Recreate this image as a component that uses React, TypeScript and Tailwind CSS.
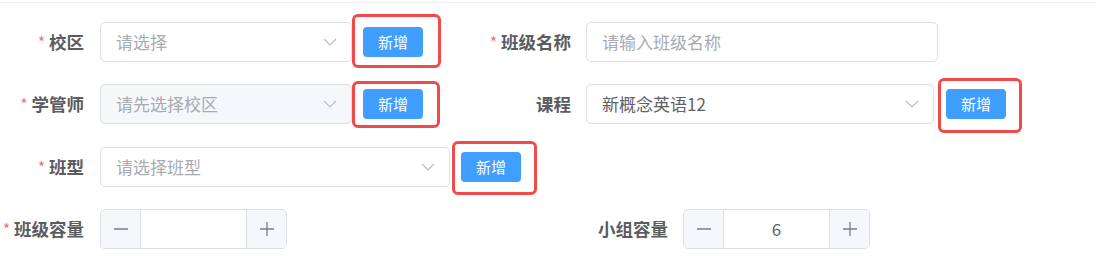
import React from 'react';

const font = { fontFamily: '"Noto Sans CJK SC", "Noto Sans", sans-serif' };

function Chevron() {
  return (
    <svg width="14" height="8" viewBox="0 0 14 8" className="shrink-0">
      <polyline points="1,1 7,7 13,1" fill="none" stroke="#b8bcc4" strokeWidth="1.2" />
    </svg>
  );
}

function Label({ text, required, width }: { text: string; required?: boolean; width: string }) {
  return (
    <div className={`${width} flex shrink-0 items-center justify-end text-[17.5px] font-bold text-[#5a5c61]`}>
      {required && <span className="mr-[4px] text-[15px] font-normal text-[#f56c6c]">*</span>}
      <span>{text}</span>
    </div>
  );
}

function Select({
  value,
  placeholder,
  width,
  disabled,
}: {
  value?: string;
  placeholder?: string;
  width: string;
  disabled?: boolean;
}) {
  return (
    <div
      className={`${width} flex h-10 items-center justify-between rounded-[5px] border border-[#dcdfe6] pl-[15px] pr-[14px] text-[17px] ${
        disabled ? 'bg-[#f5f7fa]' : 'bg-white'
      }`}
    >
      <span className={value ? 'text-[#606266]' : 'text-[#a8abb2]'}>{value ?? placeholder}</span>
      <Chevron />
    </div>
  );
}

function AddButton({ box }: { box: string }) {
  return (
    <div className="relative shrink-0">
      <button className="flex h-[30px] w-[60px] items-center justify-center rounded-[4px] bg-[#409eff] text-[15px] text-white">
        新增
      </button>
      <div className={`pointer-events-none absolute rounded-[6px] border-[3px] border-[#f04a4a] ${box}`} />
    </div>
  );
}

function NumberInput({ value, width }: { value?: string; width: string }) {
  return (
    <div className={`${width} flex h-10 overflow-hidden rounded-[5px] border border-[#dcdfe6] bg-white`}>
      <div className="flex w-[40px] items-center justify-center border-r border-[#dcdfe6] bg-[#f5f7fa]">
        <svg width="14" height="14" viewBox="0 0 14 14">
          <line x1="0" y1="7" x2="14" y2="7" stroke="#7a7d83" strokeWidth="1.3" />
        </svg>
      </div>
      <div className="flex flex-1 items-center justify-center text-[17px] text-[#606266]">{value}</div>
      <div className="flex w-[40px] items-center justify-center border-l border-[#dcdfe6] bg-[#f5f7fa]">
        <svg width="14" height="14" viewBox="0 0 14 14">
          <line x1="0" y1="7" x2="14" y2="7" stroke="#7a7d83" strokeWidth="1.3" />
          <line x1="7" y1="0" x2="7" y2="14" stroke="#7a7d83" strokeWidth="1.3" />
        </svg>
      </div>
    </div>
  );
}

export default function App() {
  return (
    <div className="h-[260px] w-[1096px] overflow-hidden bg-white pt-[2px]" style={font}>
      <div className="border-t border-[#ebeef5]" />

      <div className="mt-[19px] flex h-10 items-center">
        <div className="flex w-[486px] items-center">
          <Label text="校区" required width="w-[84px]" />
          <div className="ml-4 flex items-center gap-[11px]">
            <Select placeholder="请选择" width="w-[252px]" />
            <AddButton box="-left-[11px] -right-[18px] -top-[13px] -bottom-[11px]" />
          </div>
        </div>
        <div className="flex items-center">
          <Label text="班级名称" required width="w-[85px]" />
          <div className="ml-[15px] flex h-10 w-[352px] items-center rounded-[5px] border border-[#dcdfe6] pl-[15px] text-[17px] text-[#a8abb2]">
            请输入班级名称
          </div>
        </div>
      </div>

      <div className="mt-[22px] flex h-10 items-center">
        <div className="flex w-[486px] items-center">
          <Label text="学管师" required width="w-[84px]" />
          <div className="ml-4 flex items-center gap-[11px]">
            <Select placeholder="请先选择校区" width="w-[252px]" disabled />
            <AddButton box="-left-[11px] -right-[17px] -top-[8px] -bottom-[9px]" />
          </div>
        </div>
        <div className="flex items-center">
          <Label text="课程" width="w-[85px]" />
          <div className="ml-[15px] flex items-center gap-[12px]">
            <Select value="新概念英语12" width="w-[348px]" />
            <AddButton box="-left-[8px] -right-[16px] -top-[11px] -bottom-[14px]" />
          </div>
        </div>
      </div>

      <div className="mt-[23px] flex h-10 items-center">
        <Label text="班型" required width="w-[84px]" />
        <div className="ml-4 flex items-center gap-[11px]">
          <Select placeholder="请选择班型" width="w-[350px]" />
          <AddButton box="-left-[9px] -right-[16px] -top-[11px] -bottom-[13px]" />
        </div>
      </div>

      <div className="mt-[22px] flex h-10 items-center">
        <div className="flex w-[583px] items-center">
          <Label text="班级容量" required width="w-[84px]" />
          <div className="ml-4">
            <NumberInput width="w-[187px]" />
          </div>
        </div>
        <div className="flex items-center">
          <Label text="小组容量" width="w-[85px]" />
          <div className="ml-[15px]">
            <NumberInput value="6" width="w-[187px]" />
          </div>
        </div>
      </div>
    </div>
  );
}
